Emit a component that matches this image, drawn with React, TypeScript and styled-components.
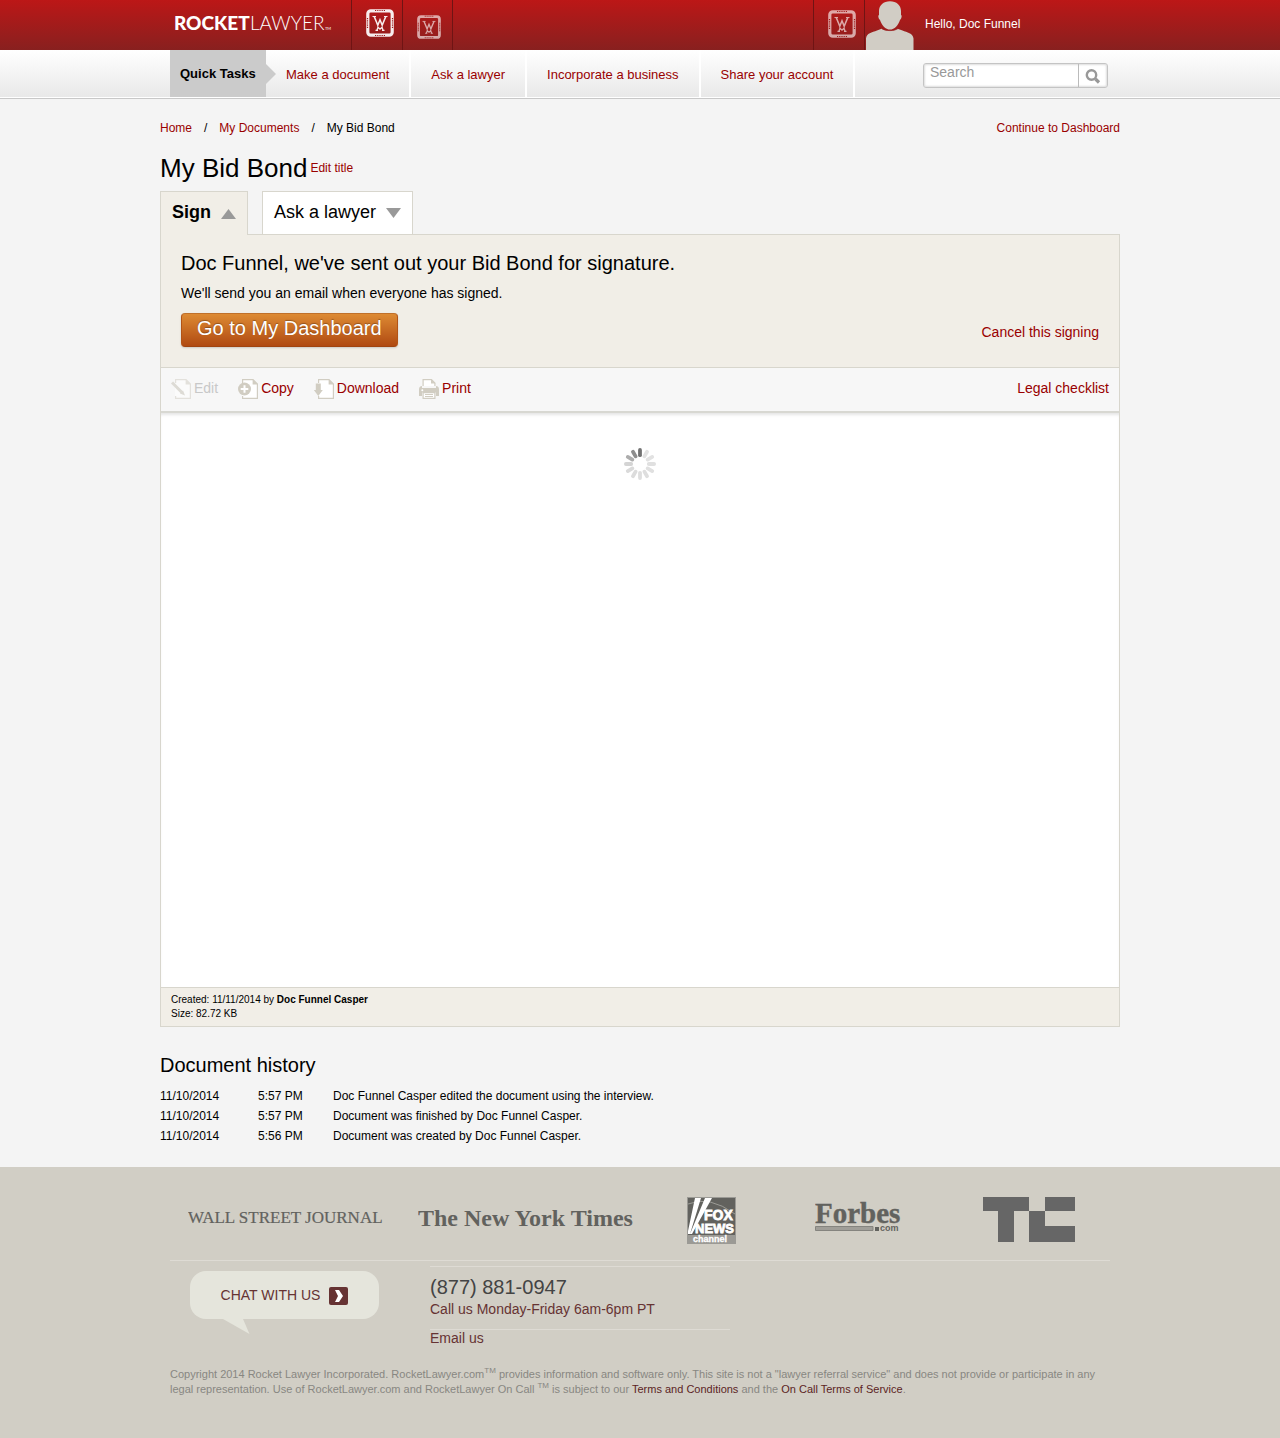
import React from "react";
import styled, { createGlobalStyle } from "styled-components";

const GlobalStyle = createGlobalStyle`
  *, *::before, *::after { box-sizing: border-box; }
  body {
    margin: 0;
    background: #f4f4f4;
    color: #000;
    font-family: "Liberation Sans", Arial, Helvetica, sans-serif;
    font-size: 12px;
    line-height: 20px;
  }
  h1, h2, p { margin: 0; font-weight: normal; }
  ul, ol { margin: 0; padding: 0; list-style: none; }
  svg { display: block; flex: none; }
  button, input { font-family: inherit; }
`;

const Link = styled.a<{ $size?: number }>`
  color: #990000;
  text-decoration: none;
  font-size: ${(p) => (p.$size ? `${p.$size}px` : "inherit")};
  &:hover { text-decoration: underline; }
`;

/* ---------- top bar ---------- */

const TopBar = styled.header`
  background: linear-gradient(#bc1717, #88201f);
`;

const TopInner = styled.div`
  display: flex;
  max-width: 960px;
  height: 50px;
  margin: 0 auto;
`;

const Brand = styled.a`
  display: flex;
  align-items: center;
  width: 191px;
  padding: 0 0 4px 14px;
  color: #fff;
  text-decoration: none;
`;

const BadgeCell = styled.a<{ $width?: number; $last?: boolean; $top: number; $dim?: boolean }>`
  display: flex;
  width: ${(p) => p.$width ?? 51}px;
  padding: ${(p) => p.$top}px 0 0 14px;
  border-left: 1px solid #6f1414;
  border-right: ${(p) => (p.$last ? "1px solid #6f1414" : "0")};
  svg { opacity: ${(p) => (p.$dim ? 0.62 : 0.92)}; }
`;

const Account = styled.div`
  display: flex;
  width: 307px;
  margin-left: auto;
`;

const Profile = styled.a`
  display: flex;
  gap: 11px;
  color: #fff;
  line-height: 48px;
  text-decoration: none;
`;

/* ---------- quick task bar ---------- */

const TaskBar = styled.nav`
  background: linear-gradient(#fff, #e8e8e8);
  border-bottom: 1px solid #c8c8c8;
  box-shadow: inset 0 -1px #fff;
`;

const TaskInner = styled.div`
  display: flex;
  max-width: 960px;
  height: 48px;
  margin: 0 auto;
  padding: 0 12px 0 10px;
`;

const TaskLabel = styled.strong`
  position: relative;
  width: 96px;
  height: 47px;
  padding-left: 10px;
  background: #cbcbcb;
  font-size: 13px;
  line-height: 48px;
  white-space: nowrap;
  &::after {
    content: "";
    position: absolute;
    top: 14px;
    left: 100%;
    border: 10px solid transparent;
    border-left-color: #cbcbcb;
    border-right-width: 0;
  }
`;

const TaskList = styled.ul`
  display: flex;
  height: 47px;
`;

const TaskItem = styled.li`
  padding: 0 20px;
  border-right: 2px solid #fff;
  line-height: 50px;
`;

const SearchForm = styled.form`
  display: flex;
  width: 185px;
  height: 25px;
  margin: 13px 0 0 auto;
  border: 1px solid #c4c4c4;
  border-radius: 3px;
  background: #fff;
  box-shadow: inset 0 0 2px 1px #ddd;
`;

const SearchInput = styled.input`
  flex: 1;
  min-width: 0;
  padding: 0 6px 7px;
  border: 0;
  background: none;
  color: #333;
  font-size: 14px;
  &::placeholder { color: #999; opacity: 1; }
`;

const SearchButton = styled.button`
  display: flex;
  align-items: center;
  justify-content: center;
  width: 29px;
  padding: 2px 0 0;
  border: 0;
  border-left: 1px solid #bbb;
  background: none;
`;

/* ---------- page head ---------- */

const Page = styled.main`
  max-width: 960px;
  margin: 0 auto;
  padding: 19px 0 21px;
`;

const Crumbs = styled.div`
  display: flex;
  justify-content: space-between;
`;

const CrumbList = styled.ol`
  display: flex;
`;

const Crumb = styled.li`
  &:not(:last-child)::after {
    content: "/";
    margin: 0 12px;
  }
`;

const TitleRow = styled.div`
  display: flex;
  align-items: center;
  gap: 3px;
  margin-top: 15px;
`;

const Title = styled.h1`
  font-size: 26px;
  line-height: 30px;
`;

const Tabs = styled.div`
  display: flex;
  gap: 14px;
  margin-top: 8px;
`;

const Tab = styled.button<{ $active?: boolean }>`
  position: relative;
  display: flex;
  align-items: center;
  gap: 10px;
  height: ${(p) => (p.$active ? 44 : 43)}px;
  margin-bottom: ${(p) => (p.$active ? -1 : 0)}px;
  padding: 0 11px 2px;
  border: 1px solid #d8d6cd;
  border-bottom: 0;
  background: ${(p) => (p.$active ? "#f1eee7" : "#fff")};
  color: #000;
  font-size: 18px;
  font-weight: ${(p) => (p.$active ? "bold" : "normal")};
  svg { margin-top: 2px; }
`;

/* ---------- document panel ---------- */

const Panel = styled.section`
  border: 1px solid #d8d6cd;
`;

const Notice = styled.div`
  padding: 13px 20px 20px;
  background: #f1eee7;
`;

const NoticeTitle = styled.h2`
  font-size: 20px;
  line-height: 30px;
`;

const NoticeText = styled.p`
  margin-top: 5px;
  font-size: 14px;
`;

const NoticeActions = styled.div`
  display: flex;
  align-items: center;
  justify-content: space-between;
  margin-top: 10px;
`;

const DashboardButton = styled.button`
  height: 34px;
  padding: 0 15px 4px;
  border: 1px solid #b25316;
  border-color: #c0702a #b25316 #a04410;
  border-radius: 4px;
  background: linear-gradient(#dd8a33, #b04a12);
  box-shadow: 0 1px 2px rgba(0, 0, 0, 0.15);
  color: #fff;
  font-size: 20px;
  line-height: 28px;
  text-shadow: 0 -1px 1px rgba(0, 0, 0, 0.3);
`;

const CancelWrap = styled.span`
  padding-top: 4px;
`;

const Toolbar = styled.div`
  display: flex;
  gap: 20px;
  padding: 10px 10px 12px;
  border-top: 1px solid #d8d6cd;
  border-bottom: 2px solid #d8d8d2;
  background: #f7f7f7;
  font-size: 14px;
`;

const Tool = styled.button<{ $end?: boolean }>`
  display: flex;
  gap: 3px;
  margin-left: ${(p) => (p.$end ? "auto" : "0")};
  padding: 0;
  border: 0;
  background: none;
  color: #990000;
  font-size: 14px;
  line-height: 20px;
  svg { margin-top: 1px; }
  &:disabled { color: #c8c8c8; }
  &:disabled svg { opacity: 0.5; }
`;

const Viewer = styled.div`
  display: flex;
  justify-content: center;
  min-height: 574px;
  padding-top: 35px;
  background: #fff;
  box-shadow: inset 0 3px 3px -1px #e6e6e6;
`;

const Meta = styled.div`
  padding: 5px 10px;
  border-top: 1px solid #d8d6cd;
  background: #f1eee7;
  font-size: 10px;
  line-height: 14px;
`;

const HistoryTitle = styled.h2`
  margin-top: 23px;
  font-size: 20px;
  line-height: 30px;
`;

const History = styled.table`
  margin-top: 6px;
  border-collapse: collapse;
  td { padding: 0; }
  td:nth-child(1) { width: 98px; }
  td:nth-child(2) { width: 75px; }
`;

/* ---------- footer ---------- */

const Footer = styled.footer`
  background: #d1cec5;
  color: #888782;
`;

const FooterInner = styled.div`
  max-width: 940px;
  margin: 0 auto;
  padding: 29px 0 41px;
`;

const PressRow = styled.div`
  display: grid;
  grid-template-columns: 230px 269px 128px 168px 1fr;
  height: 65px;
  padding-left: 18px;
  border-bottom: 1px solid #dedbd4;
`;

const SupportRow = styled.div`
  display: flex;
  gap: 51px;
  padding: 5px 0 0 20px;
`;

const Chat = styled.a`
  position: relative;
  display: flex;
  align-items: center;
  justify-content: center;
  gap: 9px;
  width: 189px;
  height: 48px;
  margin-top: 5px;
  border-radius: 16px;
  background: #e5e5dc;
  color: #663333;
  font-size: 14px;
  text-decoration: none;
  svg { margin-top: 2px; }
`;

const ChatTail = styled.svg`
  position: absolute;
  top: 46px;
  left: 33px;
`;

const Contact = styled.div`
  width: 300px;
  border-top: 1px solid #dedbd4;
  color: #663333;
  font-size: 14px;
`;

const Phone = styled.p`
  padding-top: 8px;
  color: #444;
  font-size: 20px;
  line-height: 24px;
`;

const EmailLine = styled.p`
  margin-top: 10px;
  border-top: 1px solid #dedbd4;
  line-height: 16px;
`;

const FooterLink = styled.a<{ $dark?: boolean }>`
  color: ${(p) => (p.$dark ? "#5c1f1f" : "#663333")};
  text-decoration: none;
`;

const Legal = styled.p`
  margin-top: 21px;
  font-size: 11px;
  line-height: 15px;
  sup { font-size: 8px; line-height: 0; }
`;

/* ---------- drawings ---------- */

const Wordmark = () => (
  <svg width="162" height="30" viewBox="0 0 162 30" fill="#fff" fontFamily="Lato, sans-serif" role="img" aria-label="Rocket Lawyer">
    <text x="0" y="22" fontSize="19" fontWeight="900">ROCKET</text>
    <text x="76" y="22" fontSize="19" fontWeight="300">LAWYER</text>
    <text x="151" y="22" fontSize="4">TM</text>
  </svg>
);

const Emblem = ({ size }: { size: number }) => (
  <svg width={size} height={size} viewBox="0 0 28 28" fill="none" stroke="#fff">
    <rect x="1.800" y="1.800" width="24.400" height="24.400" rx="3" strokeWidth="3.200" />
    <path d="M9 1.500h10M9 26.500h10M1.500 9v10M26.500 9v10" stroke="#9c1c1c" strokeWidth="1.200" strokeDasharray="1.200 1" />
    <path d="M6.500 7.500h3.500M18 7.500h3.500" strokeWidth="1.100" />
    <path d="M8.200 7.500 11.800 16.200 14 10.800l2.200 5.400 3.600-8.700" strokeWidth="1.600" />
    <path d="M9.500 21.300h2.500M16 21.300h2.500M11 21l1-2.800 2 2 2-2 1 2.800" strokeWidth="1.300" />
  </svg>
);

const Avatar = () => (
  <svg width="49" height="50" viewBox="0 0 49 50" fill="#d1cdc5">
    <path d="M1 50V38.500C1.500 33 7 32.500 12 30.500l4.500-1.800C19 31 29 31.500 32.500 28.700l5 1.800C42 32.500 48 33 48.500 38.500V50Z" />
    <path d="M25 1.200c6.500 0 11 4 11 9.800v4c1 0 1 3-1 5-1.500 5-5.500 9.600-10 9.600S16.500 25 15 20c-2-2-2-5-1-5v-4c0-5.800 4.500-9.800 11-9.800Z" />
    <path d="M17 28.500c4 2.800 12 2.800 16 0" fill="none" stroke="#9a1d1d" strokeWidth=".8" />
  </svg>
);

const Magnifier = () => (
  <svg width="16" height="16" viewBox="0 0 16 16" fill="none" stroke="#999">
    <circle cx="6.500" cy="6" r="4.700" strokeWidth="2.400" />
    <path d="m10.500 10 3.500 3.500" strokeWidth="3.200" />
  </svg>
);

const Triangle = ({ up }: { up?: boolean }) => (
  <svg width="15" height="10" viewBox="0 0 15 10" fill="#999">
    <path d={up ? "M7.500 0 15 10H0Z" : "M0 0h15L7.500 10Z"} />
  </svg>
);

const Sheet = () => (
  <>
    <path d="M4 .6h11l4.400 4.400v14.400H4Z" fill="#fff" />
    <path d="M4.600 4V.6H15l4.400 4.400v14.400H4.600V17" fill="none" stroke="#d1cdc2" strokeWidth="1.200" />
    <path d="M14.600 0 20 5.400h-5.400Z" fill="#d1cdc2" />
  </>
);

const EditIcon = () => (
  <svg width="20" height="20" viewBox="0 0 20 20">
    <Sheet />
    <path d="m1 3.500 10 10" stroke="#c4c0b4" strokeWidth="3" />
    <path d="m12 11.500 2 5-5-2Z" fill="#c4c0b4" />
  </svg>
);

const CopyIcon = () => (
  <svg width="20" height="20" viewBox="0 0 20 20">
    <Sheet />
    <circle cx="6.500" cy="10" r="6.500" fill="#d1cdc2" />
    <path d="M6.500 6.200v7.600M2.700 10h7.600" stroke="#fff" strokeWidth="2" />
  </svg>
);

const DownloadIcon = () => (
  <svg width="20" height="20" viewBox="0 0 20 20">
    <Sheet />
    <path d="M1.800 4.500h5V11h2l-4.500 6L-.2 11h2Z" fill="#d1cdc2" />
  </svg>
);

const PrintIcon = () => (
  <svg width="20" height="20" viewBox="0 0 20 20">
    <path d="M4.100 7V.6h8.400l3.400 3.400v3" fill="#fff" stroke="#d1cdc2" strokeWidth="1.200" />
    <path d="M12 0l4.500 4.500H12Z" fill="#d1cdc2" />
    <path d="M3 7v2h14V7c2 0 3 1.500 3 3.500V17h-3v-4H3v4H0v-6.500C0 8.500 1 7 3 7Z" fill="#d1cdc2" />
    <path d="M1 9h18v4.500H1Z" fill="#d1cdc2" />
    <circle cx="3.300" cy="11.300" r="1" fill="#fff" />
    <path d="M4.100 13.600h11.800v5.800H4.100Z" fill="#fff" stroke="#d1cdc2" strokeWidth="1.200" />
    <path d="M6 15.500h8M6 17.500h8" stroke="#d1cdc2" />
  </svg>
);

const spokes = ["#727272", "#e2e2e2", "#e2e2e2", "#e0e0e0", "#e0e0e0", "#dedede", "#dedede", "#dcdcdc", "#dadada", "#d4d4d4", "#adadad", "#8e8e8e"];

const Spinner = () => (
  <svg width="32" height="32" viewBox="-16 -16 32 32" role="img" aria-label="Loading" strokeLinecap="round" strokeWidth="3.800">
    {spokes.map((color, i) => (
      <path key={i} d="M0-8.800v-5.300" stroke={color} transform={`rotate(${i * 30})`} />
    ))}
  </svg>
);

const ink = "#62625e";

const JournalLogo = () => (
  <svg width="200" height="44" viewBox="0 0 200 44" fill={ink}>
    <text x="0" y="27" fontFamily="'Liberation Serif', serif" fontSize="17" stroke={ink} strokeWidth=".2">WALL STREET JOURNAL</text>
  </svg>
);

const TimesLogo = () => (
  <svg width="230" height="44" viewBox="0 0 230 44" fill={ink}>
    <text x="0" y="30" fontFamily="'Liberation Serif', serif" fontSize="24" fontWeight="bold">The New York Times</text>
  </svg>
);

const FoxLogo = () => (
  <svg width="49" height="48" viewBox="0 0 49 48" fontFamily="'Liberation Sans', sans-serif" fontWeight="bold">
    <rect y="1" width="49" height="47" fill="#9b9a95" />
    <rect x="1" y="2" width="47" height="37" fill={ink} />
    <path d="M1 8Q22-1 48 18" fill="none" stroke="#aaa9a3" strokeWidth=".8" />
    <path d="M8 2h6L3 38H1v-3ZM18 2h7L5 38H3Z" fill="#fff" />
    <g fill="#fff" stroke="#fff">
      <text x="17" y="24" fontSize="14" strokeWidth=".8">FOX</text>
      <text x="8" y="37" fontSize="13" strokeWidth=".8">NEWS</text>
      <text x="6" y="46" fontSize="9" strokeWidth=".3">channel</text>
    </g>
  </svg>
);

const ForbesLogo = () => (
  <svg width="86" height="44" viewBox="0 0 86 44" fill={ink}>
    <text x="0" y="27" fontFamily="'Liberation Serif', serif" fontSize="29" fontWeight="bold" stroke={ink} strokeWidth=".4">Forbes</text>
    <path d="M.5 30.500h57.500v4H.5Z" fill="#a09e98" stroke="#85847f" />
    <path d="M60 31h4v4h-4Z" />
    <text x="65" y="35" fontFamily="'Liberation Sans', sans-serif" fontSize="9" fontWeight="bold">com</text>
  </svg>
);

const CrunchLogo = () => (
  <svg width="92" height="46" viewBox="0 0 92 46" fill="#666">
    <path d="M0 1h46v14H31v31H15V15H0ZM62 1h30v14H62v15h30v16H46V15h16Z" />
  </svg>
);

const Chevron = () => (
  <svg width="19" height="18" viewBox="0 0 19 18">
    <rect width="19" height="18" rx="2" fill="#663333" />
    <path d="M6 3h4l4 6-4 6H6l3-6Z" fill="#fff" />
  </svg>
);

const tasks = ["Make a document", "Ask a lawyer", "Incorporate a business", "Share your account"];

const history = [
  ["11/10/2014", "5:57 PM", "Doc Funnel Casper edited the document using the interview."],
  ["11/10/2014", "5:57 PM", "Document was finished by Doc Funnel Casper."],
  ["11/10/2014", "5:56 PM", "Document was created by Doc Funnel Casper."],
];

export default function App() {
  return (
    <>
      <GlobalStyle />
      <TopBar>
        <TopInner>
          <Brand href="#" aria-label="Rocket Lawyer home"><Wordmark /></Brand>
          <BadgeCell href="#" aria-label="Rocket Lawyer" $top={9}><Emblem size={28} /></BadgeCell>
          <BadgeCell href="#" aria-label="On Call" $top={15} $dim $last><Emblem size={24} /></BadgeCell>
          <Account>
            <BadgeCell href="#" aria-label="Account" $top={10} $width={52} $dim $last><Emblem size={28} /></BadgeCell>
            <Profile href="#"><Avatar />Hello, Doc Funnel</Profile>
          </Account>
        </TopInner>
      </TopBar>

      <TaskBar>
        <TaskInner>
          <TaskLabel>Quick Tasks</TaskLabel>
          <TaskList>
            {tasks.map((task) => (
              <TaskItem key={task}><Link href="#" $size={13}>{task}</Link></TaskItem>
            ))}
          </TaskList>
          <SearchForm onSubmit={(e) => e.preventDefault()}>
            <SearchInput type="text" placeholder="Search" aria-label="Search" />
            <SearchButton type="submit" aria-label="Submit search"><Magnifier /></SearchButton>
          </SearchForm>
        </TaskInner>
      </TaskBar>

      <Page>
        <Crumbs>
          <CrumbList>
            <Crumb><Link href="#">Home</Link></Crumb>
            <Crumb><Link href="#">My Documents</Link></Crumb>
            <Crumb>My Bid Bond</Crumb>
          </CrumbList>
          <Link href="#">Continue to Dashboard</Link>
        </Crumbs>

        <TitleRow>
          <Title>My Bid Bond</Title>
          <Link href="#">Edit title</Link>
        </TitleRow>

        <Tabs>
          <Tab type="button" $active>Sign <Triangle up /></Tab>
          <Tab type="button">Ask a lawyer <Triangle /></Tab>
        </Tabs>

        <Panel>
          <Notice>
            <NoticeTitle>Doc Funnel, we've sent out your Bid Bond for signature.</NoticeTitle>
            <NoticeText>We'll send you an email when everyone has signed.</NoticeText>
            <NoticeActions>
              <DashboardButton type="button">Go to My Dashboard</DashboardButton>
              <CancelWrap><Link href="#" $size={14}>Cancel this signing</Link></CancelWrap>
            </NoticeActions>
          </Notice>
          <Toolbar>
            <Tool type="button" disabled><EditIcon />Edit</Tool>
            <Tool type="button"><CopyIcon />Copy</Tool>
            <Tool type="button"><DownloadIcon />Download</Tool>
            <Tool type="button"><PrintIcon />Print</Tool>
            <Tool type="button" $end>Legal checklist</Tool>
          </Toolbar>
          <Viewer><Spinner /></Viewer>
          <Meta>
            <div>Created: 11/11/2014 by <strong>Doc Funnel Casper</strong></div>
            <div>Size: 82.72 KB</div>
          </Meta>
        </Panel>

        <HistoryTitle>Document history</HistoryTitle>
        <History>
          <tbody>
            {history.map(([date, time, event]) => (
              <tr key={event}><td>{date}</td><td>{time}</td><td>{event}</td></tr>
            ))}
          </tbody>
        </History>
      </Page>

      <Footer>
        <FooterInner>
          <PressRow>
            <JournalLogo />
            <TimesLogo />
            <FoxLogo />
            <ForbesLogo />
            <CrunchLogo />
          </PressRow>
          <SupportRow>
            <Chat href="#">
              CHAT WITH US <Chevron />
              <ChatTail width="27" height="15" viewBox="0 0 27 15" fill="#e5e5dc"><path d="M0 0h20l6.500 15Z" /></ChatTail>
            </Chat>
            <Contact>
              <Phone>(877) 881-0947</Phone>
              <p>Call us Monday-Friday 6am-6pm PT</p>
              <EmailLine><FooterLink href="#">Email us</FooterLink></EmailLine>
            </Contact>
          </SupportRow>
          <Legal>
            Copyright 2014 Rocket Lawyer Incorporated. RocketLawyer.com<sup>TM</sup> provides information and software only. This site is not a "lawyer referral service" and does not provide or participate in any legal representation. Use of RocketLawyer.com and RocketLawyer On Call <sup>TM</sup> is subject to our <FooterLink href="#" $dark>Terms and Conditions</FooterLink> and the <FooterLink href="#" $dark>On Call Terms of Service</FooterLink>.
          </Legal>
        </FooterInner>
      </Footer>
    </>
  );
}
